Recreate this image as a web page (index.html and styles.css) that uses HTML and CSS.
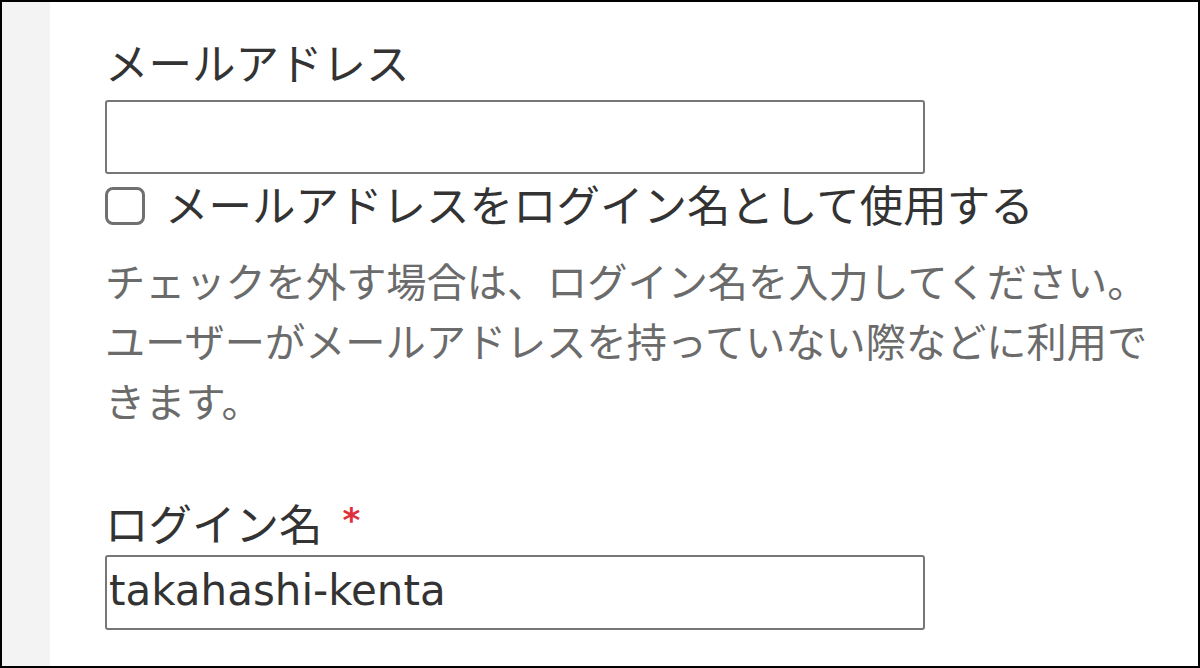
FILE: index.html
```html
<!DOCTYPE html>
<html lang="ja">
<head>
<meta charset="utf-8">
<link rel="stylesheet" href="styles.css">
</head>
<body>
<div class="frame">
  <div class="sidebar"></div>
  <div class="content">
    <div class="field">
      <label class="label">メールアドレス</label>
      <div class="input"></div>
      <div class="check-row">
        <span class="checkbox"></span>
        <span class="check-text">メールアドレスをログイン名として使用する</span>
      </div>
      <p class="help">チェックを外す場合は、ログイン名を入力してください。ユーザーがメールアドレスを持っていない際などに利用できます。</p>
    </div>
    <div class="field field-login">
      <label class="label">ログイン名<span class="req">*</span></label>
      <div class="input"><span class="value">takahashi-kenta</span></div>
    </div>
  </div>
</div>
</body>
</html>
```
FILE: styles.css
```css
html, body {
  margin: 0;
  padding: 0;
  width: 1200px;
  height: 668px;
  overflow: hidden;
  background: #fff;
}
.frame {
  box-sizing: border-box;
  width: 1200px;
  height: 668px;
  border: 2px solid #000;
  display: flex;
  font-family: "Noto Sans CJK JP", "Noto Sans", sans-serif;
  color: #333;
}
.sidebar {
  width: 48px;
  flex: none;
  background: #f3f3f3;
}
.content {
  flex: 1;
  padding: 34px 0 0 55px;
}
.field {
  display: flex;
  flex-direction: column;
}
.label {
  display: block;
  font-size: 43.5px;
  line-height: 52px;
  height: 52px;
  margin-bottom: 12px;
}
.req {
  color: #e0303c;
  font-family: "DejaVu Sans", sans-serif;
  font-weight: bold;
  font-size: 34px;
  margin-left: 20px;
  vertical-align: 9px;
}
.input {
  box-sizing: border-box;
  width: 820px;
  height: 74px;
  border: 2px solid #777;
  border-radius: 3px;
  display: flex;
  align-items: center;
  padding-left: 2px;
}
.value {
  font-family: "DejaVu Sans", sans-serif;
  font-size: 42px;
  color: #333;
  line-height: 1;
  position: relative;
  top: -2px;
}
.check-row {
  display: flex;
  align-items: center;
  height: 52px;
  margin-top: 6px;
}
.checkbox {
  box-sizing: border-box;
  width: 40px;
  height: 38px;
  border: 3px solid #707070;
  border-radius: 8px;
  flex: none;
  margin-right: 20px;
}
.check-text {
  font-size: 43.5px;
  line-height: 52px;
  position: relative;
  top: -2px;
}
.help {
  margin: 18px 0 0 0;
  width: 1060px;
  font-size: 40.2px;
  line-height: 60px;
  color: #6b6b6b;
}
.field-login {
  margin-top: 64px;
}
.field-login .label {
  margin-bottom: 9px;
}
.field-login .input {
  height: 75px;
}
```
